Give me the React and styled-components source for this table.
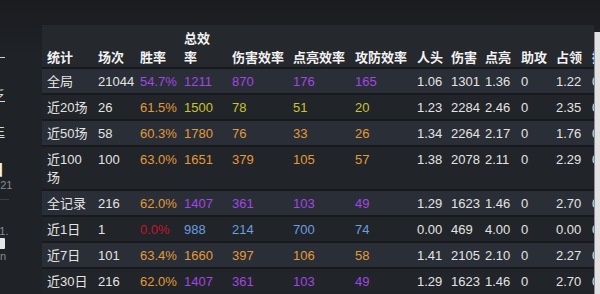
import React from 'react';
import styled, { createGlobalStyle } from 'styled-components';

const Global = createGlobalStyle`
  html, body { margin: 0; padding: 0; background: #1e2125; }
  body {
    width: 600px; height: 294px; overflow: hidden;
    font-family: "Liberation Sans", "Noto Sans CJK SC", sans-serif;
  }
`;

const COLORS = {
  w: '#e4e4e4',
  p: '#a347e4',
  o: '#e29a3c',
  y: '#c8c432',
  b: '#6c9ee0',
  r: '#c8142c',
};

const Page = styled.div`
  display: flex;
  width: 600px;
  height: 294px;
  overflow: hidden;
  background: linear-gradient(#1a1c20, #1f2226 60px, #1f2226);
`;

const Sidebar = styled.div`
  width: 42px;
  flex: none;
  display: flex;
  flex-direction: column;
  align-items: flex-start;
  overflow: hidden;
`;

const SideText = styled.div`
  margin-top: ${p => p.$top}px;
  margin-left: ${p => p.$shift}px;
  white-space: nowrap;
  font-size: ${p => p.$size || 13}px;
  line-height: ${p => p.$lh || (p.$size || 13) + 2}px;
  color: ${p => p.$color || '#d8d8d8'};
  font-weight: ${p => (p.$bold ? 700 : 400)};
  text-decoration: ${p => (p.$link ? 'underline' : 'none')};
  flex: none;
`;

const SideRule = styled.div`
  margin-top: ${p => p.$top}px;
  width: ${p => p.$w}px;
  height: 1px;
  flex: none;
  background: ${p => p.$color};
`;

const SideBox = styled.div`
  margin-top: ${p => p.$top}px;
  width: 5px;
  height: 11px;
  flex: none;
  background: #e6e6e6;
  border-radius: 0 1px 1px 0;
`;

const Main = styled.div`
  flex: 1;
  min-width: 0;
  overflow: hidden;
  padding-top: 25px;
`;

const Edge = styled.div`
  width: 6px;
  flex: none;
  margin-top: 32px;
  background: #e1e1e1;
  border-left: 1px solid #8d8f93;
  box-sizing: border-box;
`;

const Table = styled.table`
  border-collapse: collapse;
  table-layout: fixed;
  width: 605px;
  font-size: 13px;
`;

const Th = styled.th`
  padding: 3px 0 1px 5px;
  text-align: left;
  vertical-align: bottom;
  line-height: 19px;
  font-weight: 700;
  color: #f2f2f2;
  background: #25282d;
  white-space: nowrap;
  font-family: "Noto Sans CJK SC", "Liberation Sans", sans-serif;
`;

const Tr = styled.tr`
  background: ${p => (p.$odd ? '#2a2e36' : '#212428')};
`;

const Td = styled.td`
  padding: 4px 0 2px 5px;
  line-height: 18px;
  vertical-align: top;
  white-space: nowrap;
  color: ${p => COLORS[p.$c] || COLORS.w};
  border-top: 2px solid #17191c;
`;

const Label = styled.span`
  font-family: "Liberation Sans", "Noto Sans CJK SC", sans-serif;
`;

const widths = [51, 42, 44, 48, 61, 62, 62, 34, 34, 36, 35, 36, 60];
const headers = ['统计', '场次', '胜率', ['总效', '率'], '伤害效率', '点亮效率', '攻防效率', '人头', '伤害', '点亮', '助攻', '占领', '摧毁'];

const rows = [
  { label: '全局', n: '21044', wr: ['54.7%', 'p'], eff: [['1211', '870', '176', '165'], 'p'], rest: ['1.06', '1301', '1.36', '0', '1.22', '0'] },
  { label: '近20场', n: '26', wr: ['61.5%', 'o'], eff: [['1500', '78', '51', '20'], 'y'], rest: ['1.23', '2284', '2.46', '0', '2.35', '0'] },
  { label: '近50场', n: '58', wr: ['60.3%', 'o'], eff: [['1780', '76', '33', '26'], 'o'], rest: ['1.34', '2264', '2.17', '0', '1.76', '0'] },
  { label: ['近100', '场'], n: '100', wr: ['63.0%', 'o'], eff: [['1651', '379', '105', '57'], 'o'], rest: ['1.38', '2078', '2.11', '0', '2.29', '0'] },
  { label: '全记录', n: '216', wr: ['62.0%', 'o'], eff: [['1407', '361', '103', '49'], 'p'], rest: ['1.29', '1623', '1.46', '0', '2.70', '0'] },
  { label: '近1日', n: '1', wr: ['0.0%', 'r'], eff: [['988', '214', '700', '74'], 'b'], rest: ['0.00', '469', '4.00', '0', '0.00', '0'] },
  { label: '近7日', n: '101', wr: ['63.4%', 'o'], eff: [['1660', '397', '106', '58'], 'o'], rest: ['1.41', '2105', '2.10', '0', '2.27', '0'] },
  { label: '近30日', n: '216', wr: ['62.0%', 'o'], eff: [['1407', '361', '103', '49'], 'p'], rest: ['1.29', '1623', '1.46', '0', '2.70', '0'] },
];

const Lines = ({ v }) =>
  Array.isArray(v)
    ? v.map((s, i) => (
        <React.Fragment key={i}>
          {i > 0 && <br />}
          {s}
        </React.Fragment>
      ))
    : v;

export default function App() {
  return (
    <>
      <Global />
      <Page>
        <Sidebar>
          <SideRule $top={57} $w={5} $color="#cfcfcf" />
          <SideText $top={30} $shift={-21} $link>统乏</SideText>
          <SideText $top={21} $shift={-17} $link>统E</SideText>
          <SideText $top={22} $shift={-26} $size={15} $bold $color="#f4f4f4">数目</SideText>
          <SideText $top={1} $shift={-12} $size={11} $color="#8a8c90">2021</SideText>
          <SideRule $top={7} $w={9} $color="#3a3d42" />
          <SideText $top={26} $shift={-6} $size={11} $lh={11} $color="#8a8c90">11.</SideText>
          <SideBox $top={1} />
          <SideText $top={1} $shift={-6} $size={11} $color="#8a8c90">on</SideText>
        </Sidebar>
        <Main>
          <Table>
            <colgroup>
              {widths.map((w, i) => (
                <col key={i} style={{ width: w }} />
              ))}
            </colgroup>
            <thead>
              <tr>
                {headers.map((h, i) => (
                  <Th key={i}>
                    <Lines v={h} />
                  </Th>
                ))}
              </tr>
            </thead>
            <tbody>
              {rows.map((r, i) => (
                <Tr key={i} $odd={i % 2 === 0}>
                  <Td>
                    <Label>
                      <Lines v={r.label} />
                    </Label>
                  </Td>
                  <Td>{r.n}</Td>
                  <Td $c={r.wr[1]}>{r.wr[0]}</Td>
                  {r.eff[0].map((v, j) => (
                    <Td key={j} $c={r.eff[1]}>{v}</Td>
                  ))}
                  {r.rest.map((v, j) => (
                    <Td key={j}>{v}</Td>
                  ))}
                </Tr>
              ))}
            </tbody>
          </Table>
        </Main>
        <Edge />
      </Page>
    </>
  );
}
